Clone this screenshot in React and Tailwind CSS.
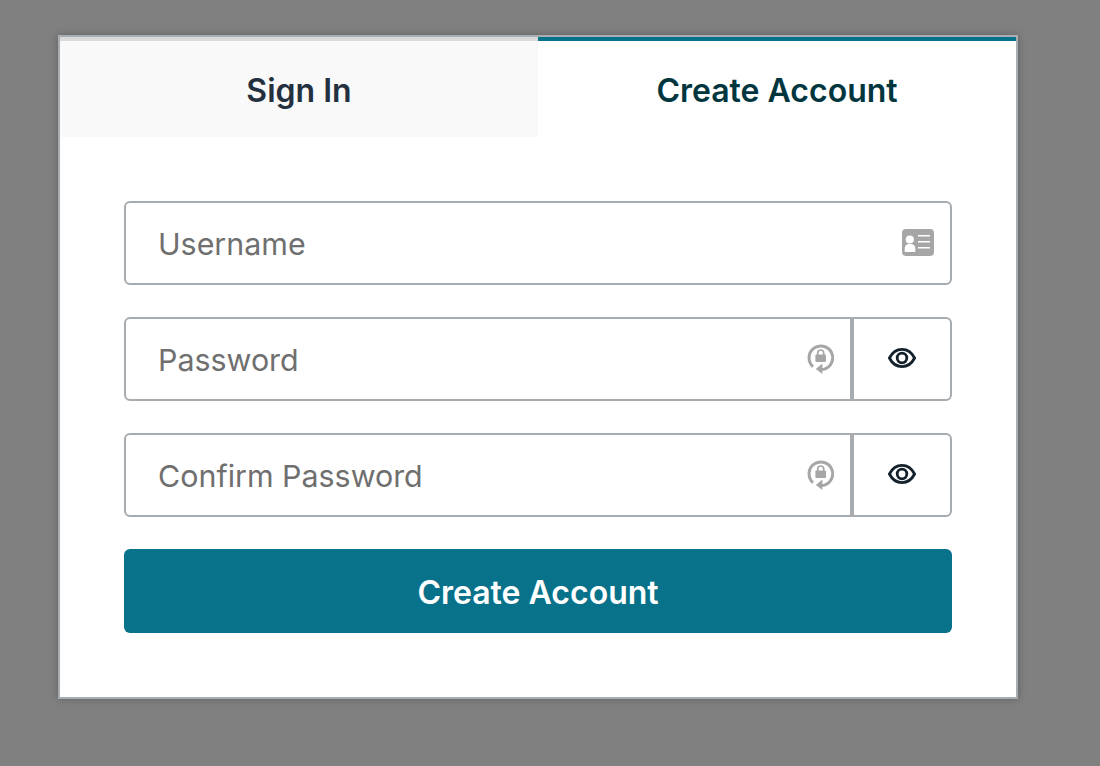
import React from "react";

function LockRotate() {
  return (
    <svg width="28" height="34" viewBox="0 0 28 34" fill="none" className="block">
      <path d="M7 24.6A11.8 11.8 0 1 1 15 27.6" stroke="#a6a6a6" strokeWidth="3" />
      <path d="M16.4 21.6l-6.6 5.3 6.6 5.1z" fill="#a6a6a6" />
      <rect x="9.4" y="12.5" width="10.6" height="7.6" rx="1" fill="#a6a6a6" />
      <path d="M11.7 13v-2a3 3 0 0 1 6 0v2" stroke="#a6a6a6" strokeWidth="1.7" />
    </svg>
  );
}

function IdCard() {
  return (
    <svg width="32" height="27" viewBox="0 0 32 27" className="block">
      <rect width="32" height="27" rx="4" fill="#a6a6a6" />
      <circle cx="7.8" cy="10.5" r="4.1" fill="#fff" />
      <path d="M2.7 23v-3.5C2.7 16.6 4.8 15 6.8 15h2c2.4 0 4.5 1.6 4.5 4.5V23z" fill="#fff" />
      <path d="M16 6h12v1.6H16zM16 12h12v1.6H16zM16 18h12v1.6H16z" fill="#fff" />
    </svg>
  );
}

function Eye() {
  return (
    <svg width="28" height="20" viewBox="0 0 28 20" fill="none" className="block">
      <path d="M1.4 10C4.2 4.6 8.7 1.4 14 1.4S23.8 4.6 26.6 10C23.8 15.4 19.3 18.6 14 18.6S4.2 15.4 1.4 10z" stroke="#14212b" strokeWidth="2.8" strokeLinejoin="round" />
      <circle cx="14" cy="10" r="4.8" stroke="#14212b" strokeWidth="2.8" />
    </svg>
  );
}

function Field({ placeholder, icon, reveal }) {
  return (
    <div className="flex h-[84px] items-stretch rounded-[6px] border-2 border-[#a7acb0] bg-white">
      <div className="flex min-w-0 flex-1 items-center pl-[32px]">
        <span className="flex-1 pt-[4px] text-[30.4px] font-normal text-[#6f6f6f]">{placeholder}</span>
        <span className={reveal ? "mr-[14px] flex w-[32px] justify-center" : "mr-[16px] mb-[1px] flex w-[32px] justify-center"}>{icon}</span>
      </div>
      {reveal && (
        <div className="flex w-[100px] items-center justify-center border-l-4 border-[#a7acb0] pb-[2px]">
          <Eye />
        </div>
      )}
    </div>
  );
}

export default function App() {
  return (
    <div className="min-h-[766px] bg-[#808080] pl-[58px] pt-[35px] antialiased" style={{ fontFamily: "Inter, sans-serif" }}>
      <div className="w-[960px] border-2 border-[#a7adb0] bg-white shadow-[0_0_8px_rgba(0,0,0,0.25)]">
        <div className="flex">
          <div className="flex h-[100px] w-[478px] items-center justify-center border-t-4 border-[#d9d9d9] bg-[#f9f9f9] pt-[4px] text-[32px] font-semibold text-[#23303f]">
            Sign In
          </div>
          <div className="flex h-[100px] w-[478px] items-center justify-center border-t-4 border-[#08728b] bg-white pt-[4px] text-[32px] font-semibold text-[#02363f]">
            Create Account
          </div>
        </div>
        <div className="flex flex-col gap-[32px] px-[64px] py-[64px]">
          <Field placeholder="Username" icon={<IdCard />} />
          <Field placeholder="Password" icon={<LockRotate />} reveal />
          <Field placeholder="Confirm Password" icon={<LockRotate />} reveal />
          <button className="h-[84px] rounded-[6px] bg-[#08728b] pt-[4px] text-[32px] font-semibold text-white">Create Account</button>
        </div>
      </div>
    </div>
  );
}
